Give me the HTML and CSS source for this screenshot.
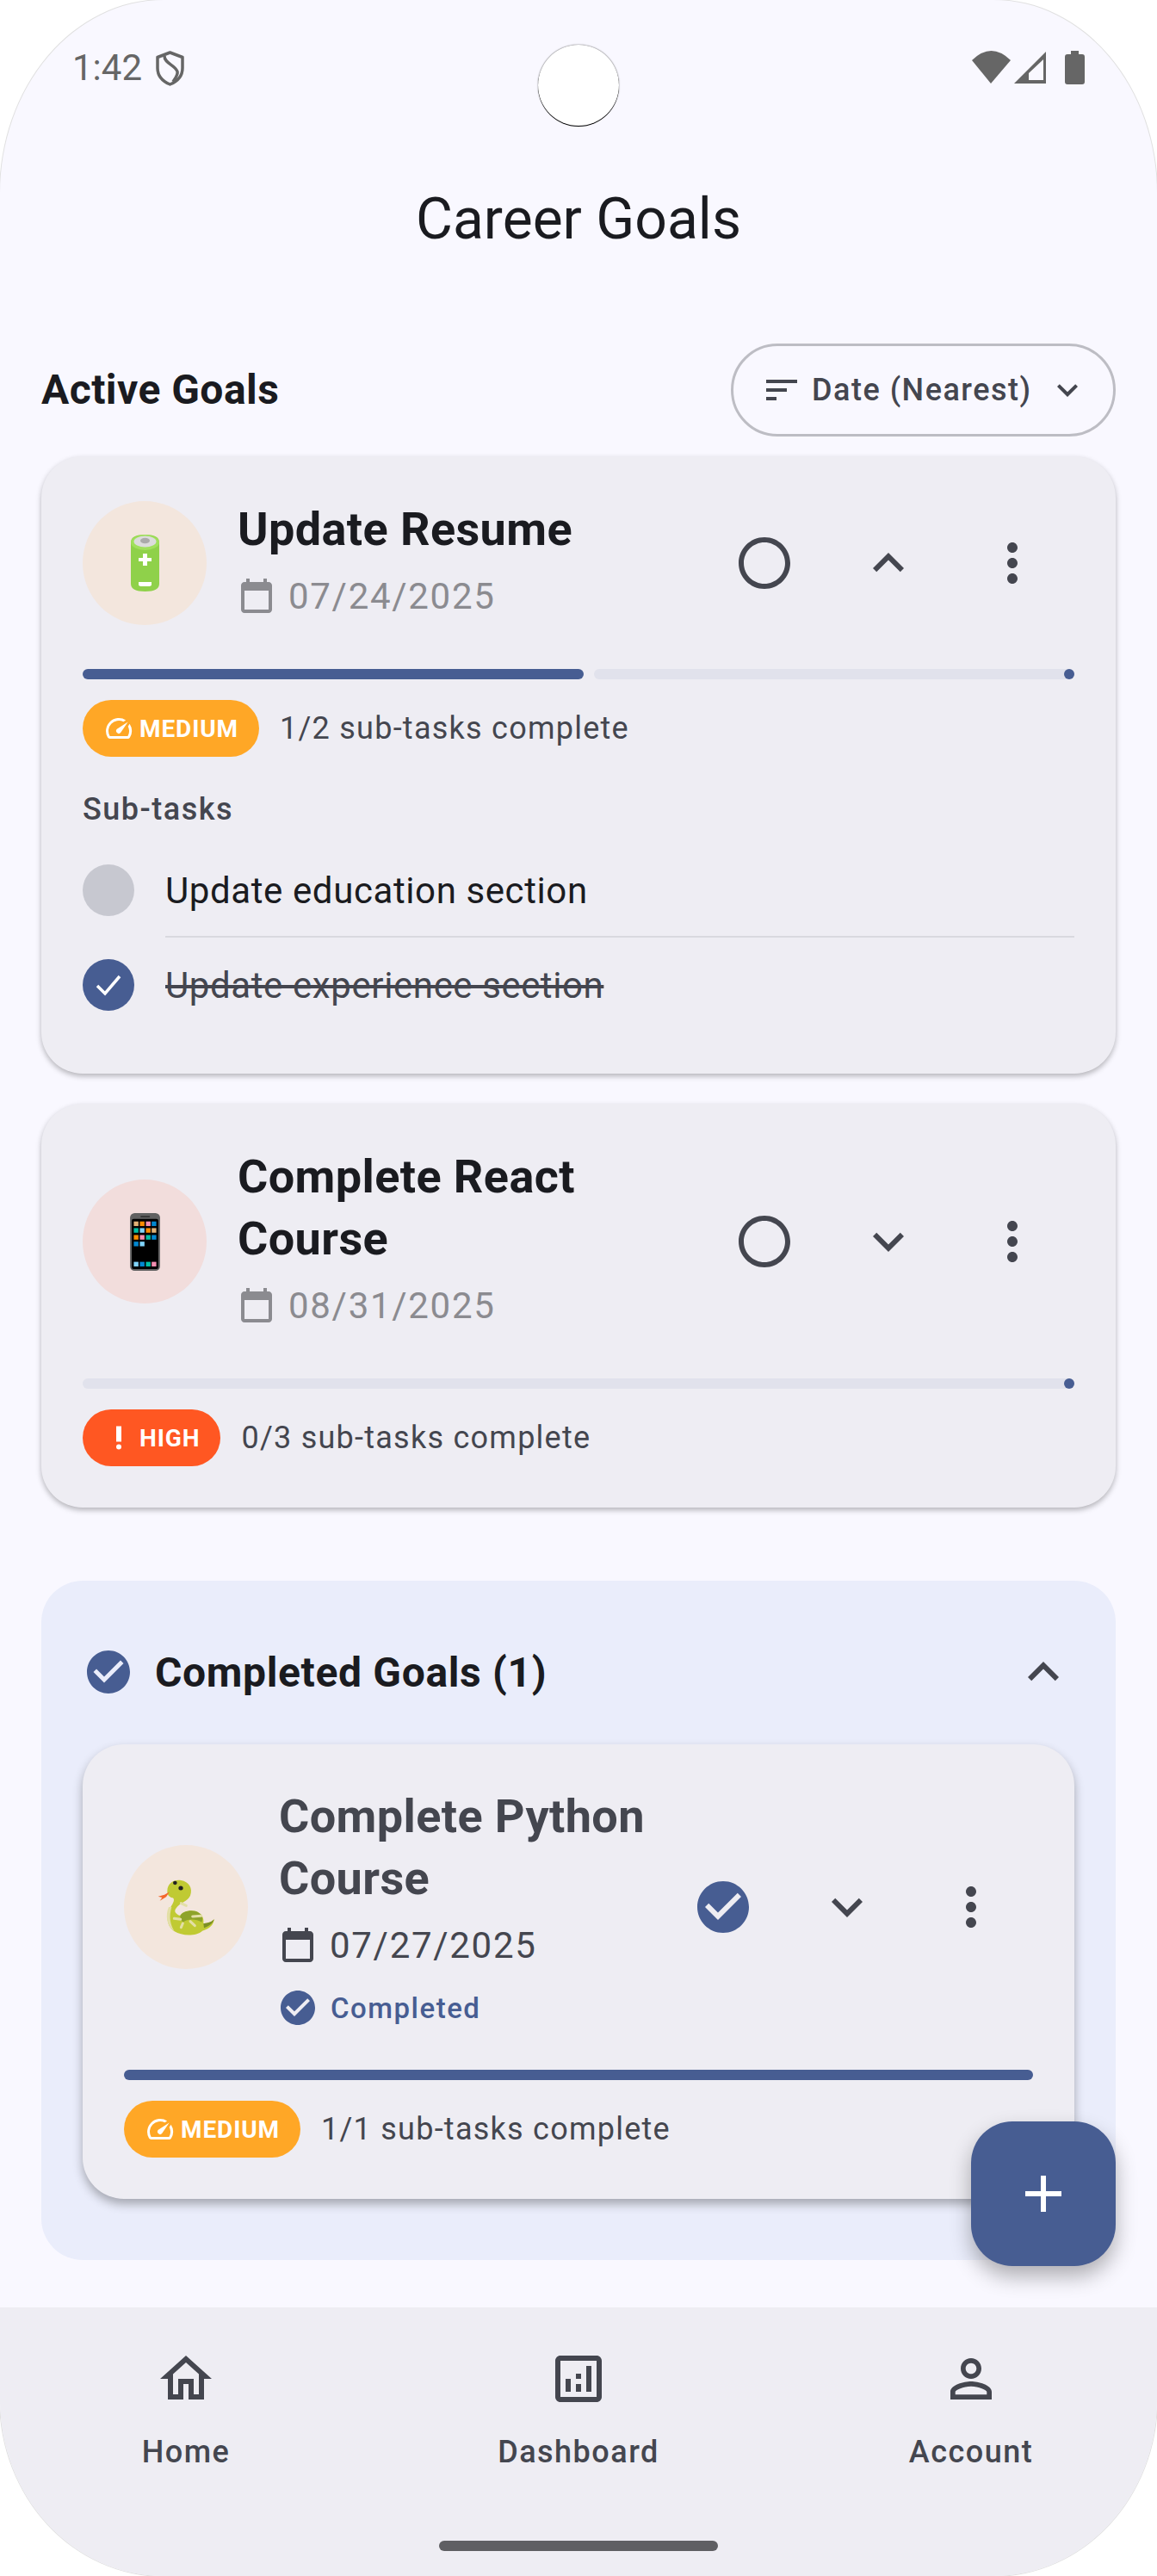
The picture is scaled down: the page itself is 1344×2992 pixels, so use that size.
FILE: index.html
```html
<!DOCTYPE html>
<html lang="en">
<head>
<meta charset="utf-8">
<title>Career Goals</title>
<link rel="stylesheet" href="styles.css">
</head>
<body>
<svg class="defs" width="0" height="0" aria-hidden="true">
  <defs>
    <symbol id="i-cal" viewBox="0 0 24 24"><path d="M19 4h-1V2h-2v2H8V2H6v2H5c-1.11 0-2 .9-2 2v14c0 1.1.89 2 2 2h14c1.1 0 2-.9 2-2V6c0-1.1-.9-2-2-2zm0 16H5V9h14v11z"/></symbol>
    <symbol id="i-radio" viewBox="0 0 24 24"><path d="M12 2C6.48 2 2 6.48 2 12s4.48 10 10 10 10-4.48 10-10S17.52 2 12 2zm0 18c-4.42 0-8-3.58-8-8s3.58-8 8-8 8 3.58 8 8-3.58 8-8 8z"/></symbol>
    <symbol id="i-down" viewBox="0 0 24 24"><path d="M16.59 8.59L12 13.17 7.41 8.59 6 10l6 6 6-6z"/></symbol>
    <symbol id="i-up" viewBox="0 0 24 24"><path d="M12 8l-6 6 1.41 1.41L12 10.83l4.59 4.58L18 14z"/></symbol>
    <symbol id="i-more" viewBox="0 0 24 24"><path d="M12 8c1.1 0 2-.9 2-2s-.9-2-2-2-2 .9-2 2 .9 2 2 2zm0 2c-1.1 0-2 .9-2 2s.9 2 2 2 2-.9 2-2-.9-2-2-2zm0 6c-1.1 0-2 .9-2 2s.9 2 2 2 2-.9 2-2-.9-2-2-2z"/></symbol>
    <symbol id="i-check" viewBox="0 0 24 24"><path d="M12 2C6.48 2 2 6.48 2 12s4.48 10 10 10 10-4.48 10-10S17.52 2 12 2zm-2 15l-5-5 1.41-1.41L10 14.17l7.59-7.59L19 8l-9 9z"/></symbol>
    <symbol id="i-speed" viewBox="0 0 24 24"><path d="M20.38 8.57l-1.23 1.85a8 8 0 0 1-.22 7.58H5.07A8 8 0 0 1 15.58 6.85l1.85-1.23A10 10 0 0 0 3.35 19a2 2 0 0 0 1.72 1h13.85a2 2 0 0 0 1.74-1 10 10 0 0 0-.27-10.44z"/><path d="M10.59 15.41a2 2 0 0 0 2.83 0l5.66-8.49-8.49 5.66a2 2 0 0 0 0 2.83z"/></symbol>
    <symbol id="i-high" viewBox="0 0 24 24"><circle cx="12" cy="19" r="2"/><path d="M10 3h4v12h-4z"/></symbol>
  </defs>
</svg>

<div class="phone">
  <span class="camera"></span>

  <header class="status">
    <div class="status-left">
      <span class="clock">1:42</span>
      <svg class="shield" viewBox="0 0 33 41"><path d="M16.500 2 L31 7.500 V20 C31 29 25 35.500 16.500 39 C8 35.500 2 29 2 20 V7.500 Z" fill="none" stroke="#666" stroke-width="3.500" stroke-linejoin="round"/><path d="M10 6 C10 15 22 16 25 24 C26 28 23 31 20 36" fill="none" stroke="#666" stroke-width="3.500"/></svg>
    </div>
    <div class="status-right">
      <svg class="wifi" viewBox="0 0 45 38"><path d="M0 11 Q22.500 -11 45 11 L22 38 Z" fill="#666"/></svg>
      <svg class="signal" viewBox="0 0 38 38"><path fill-rule="evenodd" d="M0 38 L37 1 V38 Z M17 34 H34 V10 L17 26 Z" fill="#666"/></svg>
      <svg class="battery" viewBox="0 0 23 39"><path d="M7 0 H16 V4 H20 Q23 4 23 7 V36 Q23 39 20 39 H3 Q0 39 0 36 V7 Q0 4 3 4 H7 Z" fill="#666"/></svg>
    </div>
  </header>

  <div class="appbar"><h1 class="appbar-title">Career Goals</h1></div>

  <main class="content">
    <div class="section-head">
      <h2 class="section-title">Active Goals</h2>
      <button class="sort">
        <svg class="i48 ink2" viewBox="0 0 24 24"><path d="M3 18h6v-2H3v2zM3 6v2h18V6H3zm0 7h12v-2H3v2z"/></svg>
        <span class="sort-label">Date (Nearest)</span>
        <svg class="i48 ink2" viewBox="0 0 24 24"><use href="#i-down"/></svg>
      </button>
    </div>

    <article class="card card-first">
      <div class="card-head">
        <div class="emoji emoji-orange">
          <svg class="em-battery" viewBox="0 0 33 66">
            <path d="M0 9 Q0 0 16.500 0 Q33 0 33 9 V57 Q33 66 16.500 66 Q0 66 0 57 Z" fill="#8fd14a"/>
            <ellipse cx="16.500" cy="9" rx="16.500" ry="9" fill="#a0e05c"/>
            <ellipse cx="16.500" cy="8" rx="13" ry="6.500" fill="#dcdcdc"/>
            <ellipse cx="16.500" cy="7" rx="5.500" ry="3.200" fill="#aaa"/>
            <path d="M14 22 H19 V27 H24 V31 H19 V36 H14 V31 H9 V27 H14 Z" fill="#fff"/>
            <path d="M9 55 H24 V58 Q24 60 20 60 H13 Q9 60 9 58 Z" fill="#fff"/>
          </svg>
        </div>
        <div class="info">
          <h3 class="goal-title">Update Resume</h3>
          <div class="date-row"><svg class="i48 muted"><use href="#i-cal"/></svg><span class="date muted-text">07/24/2025</span></div>
        </div>
        <div class="actions">
          <span class="act"><svg class="i72 ink2"><use href="#i-radio"/></svg></span>
          <span class="act"><svg class="i72 ink2"><use href="#i-up"/></svg></span>
          <span class="act"><svg class="i72 ink2"><use href="#i-more"/></svg></span>
        </div>
      </div>
      <div class="progress">
        <span class="bar bar-half"></span>
        <span class="track"><span class="stop"></span></span>
      </div>
      <div class="meta">
        <span class="badge badge-medium"><svg class="i36"><use href="#i-speed"/></svg>MEDIUM</span>
        <span class="meta-text">1/2 sub-tasks complete</span>
      </div>
      <div class="sub-title">Sub-tasks</div>
      <div class="sub-row sub-row-line">
        <span class="dot dot-empty"></span>
        <span class="sub-text">Update education section</span>
      </div>
      <div class="sub-row">
        <span class="dot dot-done"><svg viewBox="0 0 60 60" class="tick"><path d="M17 31 L26 40 L43 20" fill="none" stroke="#fff" stroke-width="3.500"/></svg></span>
        <span class="sub-text sub-done">Update experience section</span>
      </div>
    </article>

    <article class="card card-second">
      <div class="card-head">
        <div class="emoji emoji-red">
          <svg class="em-phone" viewBox="60 84 104 200">
            <rect x="60" y="84" width="104" height="200" rx="16" fill="#616161"/>
            <rect x="66" y="104" width="92" height="174" rx="6" fill="#000"/>
            <rect x="96" y="94" width="33" height="5" rx="2" fill="#333"/>
            <g>
              <rect x="73" y="113" width="16" height="16" fill="#e2b277"/><rect x="94" y="113" width="16" height="16" fill="#fb8c00"/><rect x="115" y="113" width="16" height="16" fill="#f48fb1"/><rect x="135" y="113" width="16" height="16" fill="#0288d1"/>
              <rect x="73" y="136" width="16" height="16" fill="#00bfa5"/><rect x="94" y="136" width="16" height="16" fill="#81d4fa"/><rect x="115" y="136" width="16" height="16" fill="#fb8c00"/><rect x="135" y="136" width="16" height="16" fill="#e2b277"/>
              <rect x="73" y="160" width="16" height="16" fill="#fb8c00"/><rect x="94" y="160" width="16" height="16" fill="#f48fb1"/><rect x="115" y="160" width="16" height="16" fill="#00bfa5"/><rect x="135" y="160" width="16" height="16" fill="#0288d1"/>
              <rect x="73" y="183" width="16" height="16" fill="#0288d1"/><rect x="94" y="183" width="16" height="16" fill="#81d4fa"/>
              <rect x="73" y="253" width="16" height="16" fill="#81d4fa"/><rect x="94" y="253" width="16" height="16" fill="#0288d1"/><rect x="115" y="253" width="16" height="16" fill="#00bfa5"/><rect x="135" y="253" width="16" height="16" fill="#f48fb1"/>
            </g>
          </svg>
        </div>
        <div class="info">
          <h3 class="goal-title">Complete React Course</h3>
          <div class="date-row"><svg class="i48 muted"><use href="#i-cal"/></svg><span class="date muted-text">08/31/2025</span></div>
        </div>
        <div class="actions">
          <span class="act"><svg class="i72 ink2"><use href="#i-radio"/></svg></span>
          <span class="act"><svg class="i72 ink2"><use href="#i-down"/></svg></span>
          <span class="act"><svg class="i72 ink2"><use href="#i-more"/></svg></span>
        </div>
      </div>
      <div class="progress">
        <span class="track"><span class="stop"></span></span>
      </div>
      <div class="meta">
        <span class="badge badge-high"><svg class="i36"><use href="#i-high"/></svg>HIGH</span>
        <span class="meta-text">0/3 sub-tasks complete</span>
      </div>
    </article>

    <section class="completed">
      <div class="completed-head">
        <svg class="i60 primary" viewBox="0 0 24 24"><use href="#i-check"/></svg>
        <h2 class="completed-title">Completed Goals (1)</h2>
        <svg class="i72 ink2"><use href="#i-up"/></svg>
      </div>
      <article class="card card-done">
        <div class="card-head">
          <div class="emoji emoji-orange">
            <svg class="em-snake" viewBox="30 60 210 210">
              <path d="M70 110 C70 80 95 68 118 72 C145 76 160 100 150 125 C142 145 112 150 100 170 C92 180 100 190 115 195 C125 178 160 172 180 185 C192 192 198 205 196 222 C205 222 222 220 233 208 C232 225 220 240 192 248 C170 268 120 266 95 250 C65 230 65 190 85 160 C95 145 95 135 88 133 C76 130 70 122 70 110 Z" fill="#c0ca33"/>
              <path d="M75 165 C62 195 68 232 95 250 C80 225 75 200 85 165 Z" fill="#e3dfa6"/>
              <path d="M115 195 C125 178 160 172 180 185 C192 192 196 205 190 218 C170 205 140 205 125 218 C118 212 114 204 115 195 Z" fill="#8ea32a"/>
              <path d="M196 222 C205 222 222 220 233 208 C230 222 215 232 198 238 Z" fill="#7c8f25"/>
              <ellipse cx="97" cy="81" rx="7" ry="6.500" fill="#222"/>
              <ellipse cx="117" cy="99" rx="8" ry="7.500" fill="#222"/>
              <path d="M78 112 L66 130 L44 143 L52 132 L38 128 L60 122 Z" fill="#f4662b"/>
              <path d="M118 152 L136 160 M94 205 L116 208 M124 222 L118 236 M150 215 L166 230 M158 198 L188 196" stroke="#e3dfa6" stroke-width="9" stroke-linecap="round" fill="none"/>
            </svg>
          </div>
          <div class="info info-done">
            <h3 class="goal-title goal-title-done">Complete Python Course</h3>
            <div class="date-row"><svg class="i48 ink2"><use href="#i-cal"/></svg><span class="date ink2-text">07/27/2025</span></div>
            <div class="done-row"><svg class="i48 primary"><use href="#i-check"/></svg><span class="done-label">Completed</span></div>
          </div>
          <div class="actions">
            <span class="act"><svg class="i72 primary"><use href="#i-check"/></svg></span>
            <span class="act"><svg class="i72 ink2"><use href="#i-down"/></svg></span>
            <span class="act"><svg class="i72 ink2"><use href="#i-more"/></svg></span>
          </div>
        </div>
        <div class="progress">
          <span class="bar bar-full"></span>
        </div>
        <div class="meta">
          <span class="badge badge-medium"><svg class="i36"><use href="#i-speed"/></svg>MEDIUM</span>
          <span class="meta-text">1/1 sub-tasks complete</span>
        </div>
      </article>
    </section>
  </main>

  <button class="fab"><svg class="i72 white" viewBox="0 0 24 24"><path d="M19 13h-6v6h-2v-6H5v-2h6V5h2v6h6v2z"/></svg></button>

  <nav class="nav">
    <div class="nav-item">
      <svg class="i72 ink2" viewBox="0 0 24 24"><path d="M12 5.690l5 4.500V18h-2v-6H9v6H7v-7.810l5-4.500M12 3L2 12h3v8h6v-6h2v6h6v-8h3L12 3z"/></svg>
      <span class="nav-label">Home</span>
    </div>
    <div class="nav-item">
      <svg class="i72 ink2" viewBox="0 0 24 24"><path d="M19 3H5c-1.100 0-2 .9-2 2v14c0 1.100.9 2 2 2h14c1.100 0 2-.9 2-2V5c0-1.100-.9-2-2-2zm0 16H5V5h14v14z"/><path d="M7 12h2v5H7zm8-5h2v10h-2zm-4 7h2v3h-2zm0-4h2v2h-2z"/></svg>
      <span class="nav-label">Dashboard</span>
    </div>
    <div class="nav-item">
      <svg class="i72 ink2" viewBox="0 0 24 24"><path d="M12 5.900c1.160 0 2.100.94 2.100 2.100s-.94 2.100-2.100 2.100S9.900 9.160 9.900 8s.94-2.100 2.100-2.100m0 9c2.970 0 6.100 1.460 6.100 2.100v1.100H5.900V17c0-.64 3.130-2.100 6.100-2.100M12 4C9.790 4 8 5.790 8 8s1.790 4 4 4 4-1.790 4-4-1.790-4-4-4zm0 9c-2.670 0-8 1.340-8 4v3h16v-3c0-2.660-5.330-4-8-4z"/></svg>
      <span class="nav-label">Account</span>
    </div>
    <span class="handle"></span>
  </nav>
</div>
</body>
</html>
```

FILE: styles.css
```css
* { box-sizing: border-box; }
html, body { margin: 0; padding: 0; background: #fff; }
body { font-family: Roboto, "Liberation Sans", sans-serif; color: #1a1b20; }
h1, h2, h3 { margin: 0; font-weight: 400; }
button { font: inherit; border: 0; background: none; padding: 0; color: inherit; }
.defs { position: absolute; }

.phone {
  position: relative;
  display: flex;
  flex-direction: column;
  width: 1344px;
  height: 2992px;
  background: #f9f8ff;
  border-radius: 190px 190px 190px 190px / 225px 225px 205px 205px;
  box-shadow: 0 0 0 1px rgba(0, 0, 0, .12);
  overflow: hidden;
}
.camera {
  position: absolute;
  left: 625px;
  top: 52px;
  width: 94px;
  height: 94px;
  background: #fff;
  border-radius: 50%;
  box-shadow: 0 1px 0 0 #000, 0 0 1.5px 0 #333;
}

.status {
  display: flex;
  justify-content: space-between;
  align-items: flex-start;
  height: 160px;
  padding: 59px 84px 0 84px;
  flex: none;
}
.status-left, .status-right { display: flex; align-items: flex-start; }
.clock { font-size: 42px; line-height: 40px; color: #666; }
.shield { width: 33px; height: 41px; margin-left: 16px; }
.wifi { width: 45px; height: 38px; }
.signal { width: 38px; height: 38px; margin-left: 4px; }
.battery { width: 23px; height: 39px; margin-left: 21px; }

.appbar { height: 190px; display: flex; align-items: center; justify-content: center; flex: none; }
.appbar-title { font-size: 66px; line-height: 84px; color: #1a1b20; }

.content { flex: 1; min-height: 0; padding: 49px 48px 0; }
.section-head { display: flex; align-items: center; justify-content: space-between; height: 108px; }
.section-title { font-size: 48px; font-weight: 700; line-height: 60px; letter-spacing: .45px; }
.sort {
  display: flex;
  align-items: center;
  width: 447px;
  height: 108px;
  padding-left: 32px;
  border: 3px solid #bdbdc4;
  border-radius: 54px;
  color: #44464f;
}
.sort-label { font-size: 36px; font-weight: 500; letter-spacing: 1.5px; margin: 0 17px 0 11px; white-space: nowrap; }

.i36 { width: 36px; height: 36px; flex: none; fill: currentColor; }
.i48 { width: 48px; height: 48px; flex: none; fill: currentColor; }
.i60 { width: 60px; height: 60px; flex: none; fill: currentColor; }
.i72 { width: 72px; height: 72px; flex: none; fill: currentColor; }
.ink2 { color: #44464f; fill: #44464f; }
.muted { color: #8b8b90; fill: #8b8b90; }
.primary { color: #475d92; fill: #475d92; }
.white { color: #fff; fill: #fff; }

.card {
  background: #eeedf3;
  border-radius: 48px;
  padding: 49px 48px 48px;
  box-shadow: 0 3px 6px rgba(0, 0, 0, .28);
}
.card-first { margin-top: 23px; }
.card-second { margin-top: 35px; }
.card-head { display: flex; align-items: center; }
.emoji {
  flex: none;
  width: 144px;
  height: 144px;
  border-radius: 50%;
  display: flex;
  align-items: center;
  justify-content: center;
}
.emoji-orange { background: #f3e6dd; }
.emoji-red { background: #f2dddc; }
.em-battery { width: 33px; height: 66px; }
.em-phone { width: 35px; height: 67px; }
.em-snake { width: 70px; height: 70px; }

.info { flex: 1; min-width: 0; padding: 0 0 13px 36px; }
.info-done { padding-bottom: 0; }
.goal-title { font-size: 54px; font-weight: 700; line-height: 72px; letter-spacing: .4px; color: #1a1b20; }
.goal-title-done { color: #44464f; }
.date-row { display: flex; align-items: center; margin: 17px 0 0 -2px; height: 48px; }
.date { font-size: 42px; letter-spacing: 1.7px; margin-left: 13px; }
.muted-text { color: #8b8b90; }
.ink2-text { color: #44464f; }
.done-row { display: flex; align-items: center; margin: 25px 0 0 -2px; height: 48px; }
.done-label { font-size: 33px; font-weight: 500; letter-spacing: 1.5px; margin-left: 14px; color: #475d92; }
.actions { display: flex; flex: none; }
.act { width: 144px; height: 144px; display: flex; align-items: center; justify-content: center; }

.progress { display: flex; gap: 12px; margin-top: 48px; height: 12px; }
.bar { display: block; height: 12px; background: #475d92; border-radius: 6px; }
.bar-half { width: 582px; flex: none; }
.bar-full { flex: 1; }
.track { position: relative; flex: 1; display: block; height: 12px; background: #e1e2ec; border-radius: 6px; }
.stop { position: absolute; right: 0; top: 0; width: 12px; height: 12px; background: #475d92; border-radius: 50%; }

.meta { display: flex; align-items: center; margin-top: 24px; gap: 24px; }
.badge {
  display: flex;
  align-items: center;
  height: 66px;
  padding: 0 24px;
  border-radius: 33px;
  color: #fff;
  fill: #fff;
  font-size: 28px;
  font-weight: 700;
  letter-spacing: .9px;
  gap: 6px;
}
.badge-medium { background: #ffa726; }
.badge-high { background: #ff5722; }
.meta-text { font-size: 36px; letter-spacing: 1.250px; color: #44464f; }

.sub-title { margin: 37px 0 15px; font-size: 36px; font-weight: 500; line-height: 48px; letter-spacing: 1.500px; color: #44464f; }
.sub-row { position: relative; display: flex; align-items: center; height: 110px; gap: 36px; }
.sub-row-line::after { content: ""; position: absolute; left: 96px; right: 0; bottom: 0; height: 2px; background: #d9d9df; }
.dot { width: 60px; height: 60px; border-radius: 50%; flex: none; }
.dot-empty { background: #c7c8d0; }
.dot-done { background: #475d92; }
.tick { display: block; width: 60px; height: 60px; }
.sub-text { font-size: 42px; letter-spacing: .6px; color: #1a1b20; }
.sub-done { color: #44464f; text-decoration: line-through; }

.completed { margin-top: 85px; padding: 46px 48px 71px; background: #eaedfb; border-radius: 48px; }
.completed-head { display: flex; align-items: center; height: 120px; margin-bottom: 24px; }
.completed-title { flex: 1; margin-left: 24px; font-size: 48px; font-weight: 700; letter-spacing: .65px; }
.card-done { padding-top: 48px; box-shadow: 0 6px 12px rgba(0, 0, 0, .3); }

.fab {
  position: absolute;
  left: 1128px;
  top: 2464px;
  width: 168px;
  height: 168px;
  display: flex;
  align-items: center;
  justify-content: center;
  background: #475d92;
  border-radius: 48px;
  box-shadow: 0 12px 24px rgba(0, 0, 0, .3);
}

.nav { position: relative; flex: none; display: flex; justify-content: center; gap: 156px; height: 312px; background: #eeedf3; padding-top: 47px; }
.nav-item { width: 300px; display: flex; flex-direction: column; align-items: center; gap: 25px; }
.nav-label { font-size: 36px; font-weight: 500; line-height: 48px; letter-spacing: 1.500px; color: #44464f; }
.handle { position: absolute; left: 510px; bottom: 29px; width: 324px; height: 12px; background: #5f5f63; border-radius: 6px; }
```
